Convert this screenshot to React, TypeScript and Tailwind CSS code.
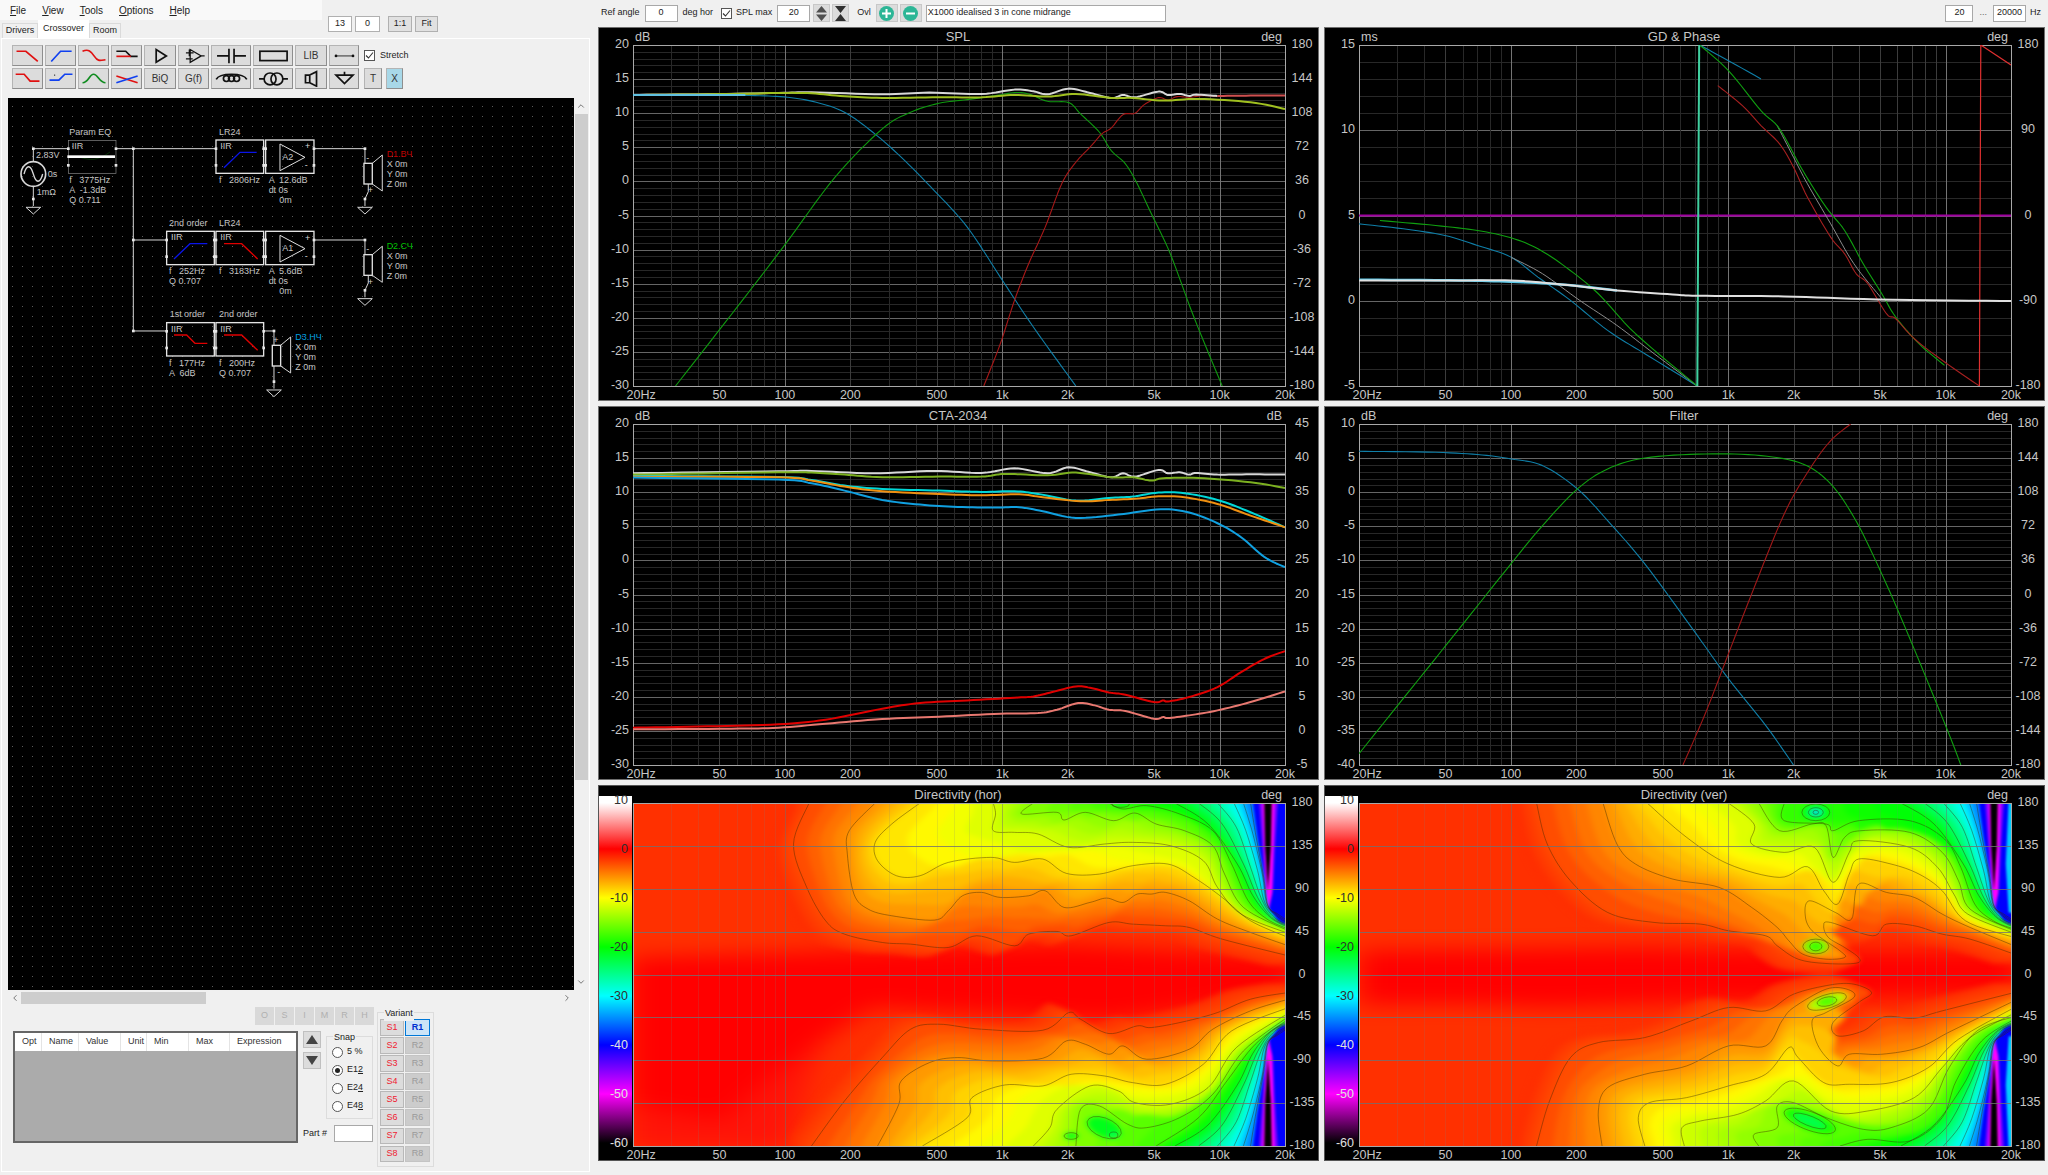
import React from 'react';
import { ChevronDown, ChevronLeft, ChevronRight, ChevronUp } from 'lucide-react';

type Pt = number[];

// ---- geometry helpers for curves and the directivity maps ----

function dense(pts: Pt[]): Pt[] {
  const out: Pt[] = [];
  for (let i = 0; i < pts.length - 1; i++) {
    const p0 = pts[Math.max(i - 1, 0)];
    const p1 = pts[i];
    const p2 = pts[i + 1];
    const p3 = pts[Math.min(i + 2, pts.length - 1)];
    for (let s = 0; s < 8; s++) {
      const t = s / 8;
      const t2 = t * t;
      const t3 = t2 * t;
      const f = (a: number, b: number, c: number, d: number) =>
        0.5 * (2 * b + (c - a) * t + (2 * a - 5 * b + 4 * c - d) * t2 + (3 * b - a - 3 * c + d) * t3);
      out.push([f(p0[0], p1[0], p2[0], p3[0]), f(p0[1], p1[1], p2[1], p3[1])]);
    }
  }
  out.push(pts[pts.length - 1]);
  return out;
}

function resample(pts: Pt[], n: number): Pt[] {
  const len = [0];
  for (let i = 1; i < pts.length; i++) len.push(len[i - 1] + Math.hypot(pts[i][0] - pts[i - 1][0], pts[i][1] - pts[i - 1][1]));
  const total = len[len.length - 1];
  const out: Pt[] = [];
  let k = 0;
  for (let i = 0; i < n; i++) {
    const d = (total * i) / (n - 1);
    while (k < len.length - 2 && len[k + 1] < d) k++;
    const t = (d - len[k]) / Math.max(len[k + 1] - len[k], 0.001);
    out.push([pts[k][0] + (pts[k + 1][0] - pts[k][0]) * t, pts[k][1] + (pts[k + 1][1] - pts[k][1]) * t]);
  }
  return out;
}

const toPath = (pts: Pt[]) => 'M' + pts.map((p) => `${p[0].toFixed(1)} ${p[1].toFixed(1)}`).join('L');
const curvePath = (pts: Pt[]) => toPath(dense(pts));

const scale: [number, number[]][] = [
  [10, [255, 255, 255]],
  [0, [255, 0, 0]],
  [-10, [255, 255, 0]],
  [-20, [0, 255, 0]],
  [-30, [0, 255, 255]],
  [-40, [0, 0, 255]],
  [-50, [255, 0, 255]],
  [-60, [0, 0, 0]],
];

function dbColor(db: number) {
  for (let i = 0; i < scale.length - 1; i++) {
    const [a, ca] = scale[i];
    const [b, cb] = scale[i + 1];
    if (db <= a && db >= b) {
      const t = (a - db) / (a - b);
      return `rgb(${ca.map((v, j) => Math.round(v + (cb[j] - v) * t)).join(',')})`;
    }
  }
  return '#000';
}

function bandsOf(chain: Pt[][], levels: number[], yEdge: number) {
  const res = chain.map((c) => resample(dense(c), 140));
  const out: { d: string; fill: string }[] = [];
  for (let i = 0; i < res.length - 1; i++) {
    for (let j = 0; j < 4; j++) {
      const t = j / 4;
      const pts = res[i].map((p, k) => [p[0] + (res[i + 1][k][0] - p[0]) * t, p[1] + (res[i + 1][k][1] - p[1]) * t]);
      const first = pts[0];
      const last = pts[pts.length - 1];
      out.push({
        d: `${toPath(pts)}L1530 ${last[1].toFixed(1)}L1530 ${yEdge}L${first[0].toFixed(1)} ${yEdge}Z`,
        fill: dbColor(levels[i] + (levels[i + 1] - levels[i]) * t),
      });
    }
  }
  return out;
}

// ---- directivity contour data (right hand edge is shared by both maps) ----

const rightTop: Pt[][] = [
  [[1240, 67], [1310, 130], [1372, 250], [1405, 345], [1442, 410], [1480, 440]],
  [[1290, 67], [1340, 130], [1385, 250], [1415, 350], [1445, 410], [1480, 436]],
  [[1330, 67], [1370, 140], [1400, 260], [1425, 360], [1450, 410], [1480, 432]],
  [[1365, 67], [1390, 150], [1415, 270], [1430, 365], [1455, 405], [1480, 428]],
  [[1385, 67], [1405, 160], [1425, 280], [1435, 370], [1457, 403], [1480, 424]],
  [[1400, 67], [1412, 170], [1428, 290], [1437, 375], [1458, 400], [1480, 420]],
];

const stripesTop: { pts: Pt[]; level: number }[] = [
  { level: -40, pts: [[1405, 60], [1415, 170], [1430, 300], [1440, 385], [1458, 420], [1470, 430], [1490, 425], [1490, 60]] },
  { level: -45, pts: [[1418, 60], [1425, 200], [1432, 330], [1440, 390], [1448, 330], [1452, 200], [1458, 60]] },
  { level: -50, pts: [[1425, 60], [1429, 200], [1434, 340], [1438, 380], [1445, 340], [1448, 200], [1451, 60]] },
  { level: -60, pts: [[1429, 60], [1431, 200], [1437, 330], [1443, 200], [1445, 60]] },
];

const flipY = (pts: Pt[]) => pts.map((p) => [p[0], 1162 - p[1]]);
const toVer = (pts: Pt[]) => pts.map((p) => [85 + ((p[0] - 92) * 1403) / 1381, p[1]]);
const offset = (pts: Pt[], dx: number, dy: number) => pts.map((p) => [p[0] + dx, p[1] + dy]);

const horTop: Pt[][] = [
  [[465, 67], [432, 190], [460, 320], [500, 420], [540, 460], [620, 485], [680, 490], [760, 500], [820, 465], [900, 495], [930, 460], [990, 452], [1020, 465], [1100, 425], [1150, 430], [1220, 435], [1270, 440], [1340, 475], [1480, 525]],
  [[605, 67], [550, 150], [546, 220], [560, 340], [590, 385], [640, 405], [730, 418], [760, 390], [790, 345], [830, 335], [870, 350], [930, 345], [965, 330], [1005, 380], [1060, 365], [1095, 352], [1130, 365], [1160, 340], [1190, 340], [1220, 335], [1270, 360], [1330, 415], [1400, 455], [1480, 495]],
  [[700, 67], [640, 130], [605, 185], [610, 240], [650, 285], [700, 285], [760, 245], [850, 230], [900, 245], [960, 235], [1010, 278], [1080, 280], [1150, 255], [1225, 250], [1280, 290], [1340, 350], [1400, 420], [1480, 470]],
  [[855, 67], [860, 100], [855, 150], [900, 155], [950, 160], [1015, 200], [1090, 190], [1150, 185], [1230, 195], [1300, 240], [1330, 320], [1380, 400], [1480, 458]],
  [[940, 67], [915, 100], [990, 95], [1005, 118], [1050, 95], [1110, 120], [1155, 97], [1200, 130], [1260, 150], [1320, 195], [1345, 280], [1385, 380], [1480, 450]],
  [[1100, 67], [1130, 85], [1180, 75], [1250, 100], [1320, 150], [1360, 250], [1395, 360], [1435, 415], [1480, 445]],
  ...rightTop,
];

const horBottom: Pt[][] = [
  [[470, 1095], [540, 960], [620, 830], [680, 745], [740, 730], [830, 745], [960, 748], [1015, 695], [1040, 715], [1100, 758], [1160, 735], [1190, 740], [1260, 722], [1330, 695], [1400, 655], [1480, 635]],
  [[610, 1095], [655, 970], [660, 900], [720, 845], [780, 830], [850, 840], [960, 832], [1010, 780], [1050, 790], [1100, 820], [1130, 795], [1180, 835], [1270, 805], [1320, 745], [1400, 690], [1480, 655]],
  [[705, 1095], [800, 1010], [810, 950], [880, 912], [960, 915], [1020, 880], [1090, 885], [1150, 905], [1220, 910], [1300, 850], [1360, 750], [1480, 680]],
  [[940, 1095], [975, 1040], [990, 985], [1060, 915], [1120, 930], [1155, 965], [1230, 970], [1310, 920], [1370, 800], [1480, 697]],
  [[1030, 1095], [1040, 985], [1080, 975], [1140, 1030], [1180, 1040], [1250, 1010], [1320, 940], [1385, 810], [1480, 707]],
  [[1200, 1095], [1290, 1010], [1350, 900], [1410, 790], [1480, 715]],
  ...rightTop.map(flipY),
];

const verTop: Pt[][] = [
  [[467, 67], [490, 190], [540, 300], [620, 395], [720, 425], [820, 430], [880, 450], [960, 465], [985, 495], [1030, 535], [1090, 548], [1155, 547], [1160, 530], [1130, 500], [1095, 470], [1085, 435], [1100, 425], [1190, 465], [1220, 430], [1280, 435], [1340, 460], [1400, 475], [1495, 520]],
  [[610, 67], [640, 190], [680, 250], [760, 295], [860, 320], [930, 380], [985, 440], [1010, 480], [1040, 520], [1090, 535], [1130, 530], [1120, 510], [1060, 450], [1045, 400], [1055, 360], [1110, 395], [1145, 415], [1160, 310], [1220, 335], [1280, 350], [1340, 400], [1400, 440], [1495, 495]],
  [[705, 67], [790, 170], [880, 250], [990, 290], [1050, 258], [1085, 330], [1115, 370], [1140, 280], [1160, 235], [1230, 250], [1290, 280], [1340, 330], [1390, 420], [1495, 470]],
  [[880, 67], [935, 130], [930, 190], [1000, 215], [1065, 200], [1105, 305], [1140, 215], [1160, 180], [1270, 200], [1330, 260], [1365, 340], [1395, 400], [1495, 458]],
  [[945, 67], [990, 150], [1060, 130], [1090, 135], [1105, 230], [1130, 170], [1165, 150], [1270, 155], [1340, 215], [1375, 300], [1400, 385], [1495, 450]],
  [[1000, 67], [1000, 120], [1090, 130], [1105, 150], [1160, 120], [1270, 120], [1345, 175], [1380, 260], [1410, 370], [1450, 420], [1495, 445]],
  ...rightTop.map(toVer),
];

const verBottom: Pt[][] = [
  [[467, 1095], [495, 960], [540, 830], [600, 785], [700, 770], [800, 720], [880, 680], [960, 690], [1020, 640], [1100, 612], [1150, 610], [1188, 635], [1160, 665], [1105, 725], [1115, 765], [1170, 750], [1215, 708], [1280, 712], [1340, 690], [1495, 635]],
  [[608, 1095], [600, 990], [620, 920], [700, 880], [790, 855], [880, 795], [960, 795], [995, 720], [1020, 680], [1090, 625], [1135, 625], [1150, 650], [1090, 695], [1060, 720], [1075, 800], [1115, 855], [1140, 820], [1210, 820], [1290, 800], [1360, 750], [1495, 660]],
  [[700, 1095], [686, 1010], [710, 965], [790, 950], [880, 915], [960, 880], [1010, 800], [1030, 830], [1085, 905], [1140, 910], [1230, 905], [1310, 860], [1375, 775], [1495, 680]],
  [[785, 1095], [780, 1040], [820, 1020], [900, 1000], [960, 960], [1020, 900], [1100, 990], [1180, 990], [1280, 950], [1340, 860], [1400, 770], [1495, 697]],
  [[945, 1095], [935, 1060], [985, 1040], [985, 975], [1020, 965], [1090, 1010], [1170, 1045], [1230, 1040], [1310, 985], [1355, 860], [1415, 750], [1495, 707]],
  [[1120, 1095], [1180, 1075], [1270, 1080], [1340, 1010], [1370, 900], [1425, 780], [1495, 715]],
  ...rightTop.map(flipY).map(toVer),
];

const mapLevels = [-1.8, -3, -6, -9, -12, -15, -18, -21, -24, -27, -30, -33, -36];

type Island = { cx: number; cy: number; rx: number; ry: number; rot: number; level: number };

const horIslands: Island[] = [
  { cx: 1020, cy: 1065, rx: 15, ry: 10, rot: 0, level: -21 },
  { cx: 1090, cy: 1040, rx: 42, ry: 26, rot: 40, level: -21 },
  { cx: 1110, cy: 1062, rx: 9, ry: 9, rot: 0, level: -24 },
  { cx: 1125, cy: 72, rx: 18, ry: 8, rot: 0, level: -21 },
];

const verIslands: Island[] = [
  { cx: 1068, cy: 95, rx: 30, ry: 25, rot: 0, level: -21 },
  { cx: 1068, cy: 95, rx: 16, ry: 14, rot: 0, level: -27 },
  { cx: 1068, cy: 95, rx: 6, ry: 6, rot: 0, level: -33 },
  { cx: 1068, cy: 497, rx: 28, ry: 22, rot: 0, level: -15 },
  { cx: 1068, cy: 497, rx: 13, ry: 13, rot: 0, level: -18 },
  { cx: 1092, cy: 662, rx: 45, ry: 20, rot: -25, level: -13 },
  { cx: 1092, cy: 662, rx: 22, ry: 13, rot: -20, level: -17 },
  { cx: 1055, cy: 1020, rx: 62, ry: 26, rot: 30, level: -19 },
  { cx: 1055, cy: 1020, rx: 40, ry: 14, rot: 30, level: -23 },
];

// ---- curve data, in plot coordinates of 1381/1403 x 1024 units ----

type Curve = { pts: Pt[]; color: string; w?: number; raw?: boolean };

const splCurves: Curve[] = [
  { color: '#0f7fa8', w: 1.1, pts: [[92, 283], [250, 283], [350, 285], [420, 290], [480, 305], [540, 335], [600, 395], [660, 470], [730, 570], [800, 680], [870, 830], [940, 980], [1030, 1157]] },
  { color: '#0f9a0f', w: 1.1, pts: [[182, 1157], [300, 943], [410, 740], [520, 530], [620, 385], [680, 335], [740, 308], [800, 297], [860, 285], [900, 276], [930, 280], [970, 302], [1015, 306], [1040, 340], [1080, 395], [1105, 450], [1135, 490], [1160, 550], [1190, 640], [1230, 760], [1280, 950], [1340, 1157]] },
  { color: '#a81818', w: 1.1, pts: [[835, 1157], [870, 1030], [900, 900], [930, 790], [965, 680], [1000, 550], [1030, 485], [1060, 440], [1085, 400], [1105, 382], [1130, 342], [1155, 338], [1175, 312], [1205, 291], [1225, 298], [1245, 288], [1270, 290], [1300, 285], [1330, 288]] },
  { color: '#d8d8d8', w: 2, pts: [[92, 283], [250, 281], [400, 277], [470, 275], [620, 281], [720, 276], [830, 280], [900, 267], [940, 272], [970, 281], [1015, 264], [1060, 277], [1105, 292], [1130, 283], [1155, 290], [1205, 273], [1225, 283], [1250, 280], [1270, 286], [1285, 282], [1330, 286]] },
  { color: '#d05050', w: 2, pts: [[1330, 286], [1400, 285], [1473, 285]] },
  { color: '#a0c020', w: 2, pts: [[92, 283], [300, 280], [400, 277], [470, 278], [540, 287], [620, 292], [740, 290], [830, 290], [900, 283], [970, 288], [1030, 280], [1105, 292], [1150, 292], [1215, 300], [1290, 295], [1400, 305], [1473, 325]] },
  { color: '#60c0e0', w: 2, pts: [[92, 283], [200, 283], [330, 283]] },
];

const gdCurves: Curve[] = [
  { color: '#a000a0', w: 2, pts: [[85, 645], [1488, 645]], raw: true },
  { color: '#0f7fa8', w: 1.1, pts: [[85, 670], [180, 685], [270, 705], [340, 735], [412, 770], [470, 830], [540, 900], [620, 990], [700, 1060], [813, 1157]] },
  { color: '#0f7fa8', w: 1.1, pts: [[818, 133], [880, 180], [950, 235]] },
  { color: '#8c8c8c', w: 1, pts: [[412, 770], [480, 820], [560, 900], [640, 975], [720, 1060], [813, 1157]] },
  { color: '#8c8c8c', w: 1, pts: [[985, 375], [1020, 470], [1050, 550], [1100, 670], [1150, 790], [1210, 895]] },
  { color: '#10a010', w: 1.1, pts: [[130, 660], [250, 675], [340, 690], [412, 712], [470, 745], [530, 800], [600, 880], [680, 1000], [813, 1157]] },
  { color: '#10a010', w: 1.1, pts: [[818, 133], [880, 210], [950, 330], [990, 385], [1040, 510], [1090, 620], [1130, 690], [1170, 790], [1210, 880], [1240, 950], [1290, 1030], [1345, 1095]] },
  { color: '#a82020', w: 1.1, pts: [[857, 255], [910, 315], [950, 375], [990, 430], [1020, 500], [1050, 590], [1100, 710], [1130, 760], [1155, 820], [1180, 850], [1220, 940], [1240, 955], [1280, 1015], [1345, 1085], [1420, 1157]] },
  { color: '#e03030', w: 1.2, pts: [[1420, 1157], [1423, 133], [1488, 193]], raw: true },
  { color: '#40d0a0', w: 2, pts: [[813, 1157], [817, 133]], raw: true },
  { color: '#5cc8e8', w: 2.5, pts: [[85, 838], [300, 840], [412, 844], [520, 852], [640, 870]] },
  { color: '#e0e0e0', w: 2, pts: [[85, 840], [300, 840], [412, 840], [520, 852], [640, 870], [760, 882], [815, 886], [1000, 888], [1200, 897], [1488, 902]] },
];

const ctaCurves: Curve[] = [
  { color: '#d8d8d8', w: 2, pts: [[92, 218], [400, 212], [470, 211], [600, 218], [730, 211], [830, 217], [900, 203], [970, 218], [1015, 200], [1060, 215], [1105, 230], [1130, 218], [1155, 228], [1205, 208], [1225, 218], [1250, 215], [1270, 222], [1285, 217], [1330, 222], [1400, 221], [1473, 222]] },
  { color: '#7cb020', w: 2, pts: [[92, 222], [400, 215], [470, 216], [540, 222], [620, 230], [740, 228], [830, 228], [880, 220], [970, 224], [1030, 216], [1105, 230], [1150, 230], [1190, 240], [1215, 233], [1290, 232], [1400, 245], [1473, 262]] },
  { color: '#00d8d8', w: 2, pts: [[92, 226], [400, 229], [470, 238], [540, 255], [620, 265], [740, 270], [830, 274], [900, 272], [950, 280], [1030, 300], [1100, 292], [1150, 288], [1205, 276], [1260, 278], [1330, 298], [1400, 335], [1473, 380]] },
  { color: '#f09010', w: 2, pts: [[92, 228], [400, 230], [470, 240], [540, 258], [620, 272], [740, 280], [830, 284], [910, 281], [960, 290], [1040, 302], [1100, 298], [1160, 294], [1205, 287], [1260, 290], [1330, 310], [1400, 345], [1473, 380]] },
  { color: '#10a0e0', w: 2, pts: [[92, 231], [400, 237], [470, 248], [540, 270], [620, 298], [700, 312], [780, 319], [860, 321], [910, 320], [960, 332], [1030, 352], [1120, 342], [1210, 326], [1270, 336], [1330, 368], [1380, 410], [1430, 470], [1473, 500]] },
  { color: '#e00000', w: 2, pts: [[92, 982], [250, 978], [400, 972], [500, 958], [620, 925], [700, 908], [800, 900], [900, 892], [940, 888], [980, 875], [1030, 858], [1060, 862], [1100, 876], [1135, 883], [1195, 905], [1215, 900], [1225, 903], [1270, 890], [1330, 860], [1380, 815], [1430, 775], [1473, 752]] },
  { color: '#e87870', w: 2, pts: [[92, 987], [300, 985], [400, 982], [500, 970], [620, 956], [740, 949], [870, 940], [950, 938], [990, 928], [1035, 908], [1070, 915], [1100, 928], [1135, 932], [1195, 955], [1215, 950], [1225, 953], [1270, 945], [1330, 930], [1400, 905], [1473, 873]] },
];

const filterCurves: Curve[] = [
  { color: '#0f7fa8', w: 1.1, pts: [[85, 152], [250, 155], [350, 163], [412, 175], [480, 195], [555, 265], [620, 360], [700, 490], [800, 680], [880, 835], [960, 975], [1020, 1094]] },
  { color: '#10a010', w: 1.1, pts: [[85, 1060], [200, 860], [300, 686], [412, 490], [480, 375], [555, 265], [620, 205], [700, 172], [830, 160], [950, 165], [1040, 190], [1100, 250], [1150, 350], [1200, 490], [1260, 680], [1350, 985], [1380, 1094]] },
  { color: '#a01818', w: 1.1, pts: [[782, 1094], [830, 940], [880, 760], [930, 580], [1000, 340], [1055, 205], [1100, 120], [1143, 70]] },
];

// ---- chart panels ----

const PANEL_W = 721;
const PLOT_X = 35;
const PLOT_W = 652;
const freqLabels: [string, number][] = [['20Hz', 21.8], ['50', 50], ['100', 100], ['200', 200], ['500', 500], ['1k', 1000], ['2k', 2000], ['5k', 5000], ['10k', 10000], ['20k', 20000]];
const freqLines = [20, 30, 40, 50, 60, 70, 80, 90, 100, 200, 300, 400, 500, 600, 700, 800, 900, 1000, 2000, 3000, 4000, 5000, 6000, 7000, 8000, 9000, 10000, 20000];
const fx = (f: number) => PLOT_X + (Math.log10(f / 20) / 3) * PLOT_W;
const isDecade = (f: number) => f === 100 || f === 1000 || f === 10000;
const labelColor = '#c6c6c6';

function AxisText({ plotTop, plotH, left, right, title, unitL, unitR, xY }: { plotTop: number; plotH: number; left: string[]; right: string[]; title: string; unitL?: string; unitR: string; xY: number }) {
  return (
    <g fill={labelColor} fontSize={12.5}>
      <text x={360} y={14} fontSize={13} textAnchor="middle">{title}</text>
      {unitL && <text x={37} y={14}>{unitL}</text>}
      <text x={684} y={14} textAnchor="end">{unitR}</text>
      {left.map((t, i) => (
        <text key={t} x={31} y={plotTop + (plotH * i) / (left.length - 1) + 3} textAnchor="end">{t}</text>
      ))}
      {right.map((t, i) => (
        <text key={t} x={704} y={plotTop + (plotH * i) / (right.length - 1) + 3} textAnchor="middle">{t}</text>
      ))}
      {freqLabels.map(([t, f]) => (
        <text key={t} x={fx(f)} y={xY} textAnchor="middle">{t}</text>
      ))}
    </g>
  );
}

function LineChart({ title, unitL, unitR, left, right, minors, vb, curves }: { title: string; unitL: string; unitR: string; left: string[]; right: string[]; minors: number; vb: string; curves: Curve[] }) {
  const top = 18;
  const h = 341;
  const divs = (left.length - 1) * minors;
  return (
    <div className="bg-black h-full">
      <svg width={PANEL_W} height={374} className="block">
        <rect x={0.5} y={0.5} width={PANEL_W - 1} height={373} fill="none" stroke="#6e6e6e" />
        {Array.from({ length: divs + 1 }, (_, i) => {
          const y = Math.round(top + (h * i) / divs) + 0.5;
          return <line key={i} x1={PLOT_X} x2={PLOT_X + PLOT_W} y1={y} y2={y} stroke={i % minors === 0 ? '#666666' : '#282828'} />;
        })}
        {freqLines.map((f) => {
          const x = Math.round(fx(f)) + 0.5;
          return <line key={f} x1={x} x2={x} y1={top} y2={top + h} stroke={isDecade(f) ? '#747474' : f % 1000 === 0 || f === 200 || f === 500 || f === 50 ? '#3c3c3c' : '#282828'} />;
        })}
        <rect x={PLOT_X + 0.5} y={top + 0.5} width={PLOT_W} height={h} fill="none" stroke="#a8a8a8" />
        <svg x={PLOT_X} y={top} width={PLOT_W} height={h} viewBox={vb} preserveAspectRatio="none">
          {curves.map((c, i) => (
            <path key={i} d={c.raw ? toPath(c.pts) : curvePath(c.pts)} fill="none" stroke={c.color} strokeWidth={c.w ?? 1.1} vectorEffect="non-scaling-stroke" strokeLinejoin="round" />
          ))}
        </svg>
        <AxisText plotTop={top} plotH={h} left={left} right={right} title={title} unitL={unitL} unitR={unitR} xY={372} />
      </svg>
    </div>
  );
}

const barStops = [
  [0, '#ffffff'],
  [0.02, '#ffffff'],
  [(64 - 11) / 350, '#ff0000'],
  [(113 - 11) / 350, '#ffff00'],
  [(162 - 11) / 350, '#00ff00'],
  [(211 - 11) / 350, '#00ffff'],
  [(260 - 11) / 350, '#0000ff'],
  [(309 - 11) / 350, '#ff00ff'],
  [(358 - 11) / 350, '#000000'],
] as [number, string][];

function DirectivityChart({ id, title, vb, top: topChain, bottom, islands, redBand, edge, plotMap }: { id: string; title: string; vb: string; top: Pt[][]; bottom: Pt[][]; islands: Island[]; redBand: Pt[][]; edge?: boolean; plotMap: (p: Pt[]) => Pt[] }) {
  const plotTop = 18;
  const plotH = 343;
  const bands = [
    ...bandsOf([offset(topChain[0], -45, 28), ...topChain], mapLevels, 30),
    ...bandsOf([offset(bottom[0], -45, -28), ...bottom], mapLevels, 1135),
  ];
  const lines = [...topChain, ...bottom].map((c) => curvePath(c));
  const stripes = [
    ...stripesTop.map((s) => ({ level: s.level, d: toPath(plotMap(s.pts)) + 'Z' })),
    ...stripesTop.map((s) => ({ level: s.level, d: toPath(plotMap(flipY(s.pts))) + 'Z' })),
  ];
  const edgeShapes = edge
    ? [plotMap([[1468, 60], [1462, 250], [1468, 395], [1490, 400], [1490, 60]]), plotMap(flipY([[1468, 60], [1462, 250], [1468, 395], [1490, 400], [1490, 60]]))]
    : [];
  return (
    <div className="bg-black h-full">
      <svg width={PANEL_W} height={376} className="block">
        <defs>
          <linearGradient id={`${id}-bar`} x1="0" x2="0" y1="0" y2="1">
            {barStops.map(([o, c]) => (
              <stop key={o} offset={o} stopColor={c} />
            ))}
          </linearGradient>
          <filter id={`${id}-wide`} filterUnits="userSpaceOnUse" x={-100} y={-100} width={1800} height={1500} colorInterpolationFilters="sRGB">
            <feGaussianBlur stdDeviation="30 30" />
          </filter>
          <filter id={`${id}-soft`} filterUnits="userSpaceOnUse" x={-100} y={-100} width={1800} height={1500} colorInterpolationFilters="sRGB">
            <feGaussianBlur stdDeviation="7 8" />
          </filter>
          <filter id={`${id}-thin`} filterUnits="userSpaceOnUse" x={-100} y={-100} width={1800} height={1500} colorInterpolationFilters="sRGB">
            <feGaussianBlur stdDeviation="2 3" />
          </filter>
        </defs>
        <rect x={0.5} y={0.5} width={PANEL_W - 1} height={375} fill="none" stroke="#555555" />
        <rect x={1} y={11} width={33} height={350} fill={`url(#${id}-bar)`} />
        <svg x={PLOT_X} y={plotTop} width={PLOT_W} height={plotH} viewBox={vb} preserveAspectRatio="none">
          <g filter={`url(#${id}-wide)`}>
            <rect x={-50} y={-50} width={1700} height={1300} fill="#ff3000" />
            {redBand.map((p, i) => (
              <path key={i} d={toPath(p) + 'Z'} fill={i === 0 ? '#ff1408' : '#ff0000'} />
            ))}
          </g>
          <g filter={`url(#${id}-soft)`}>
            {bands.map((b, i) => (
              <path key={i} d={b.d} fill={b.fill} />
            ))}
            {islands.map((e, i) => (
              <ellipse key={i} cx={e.cx} cy={e.cy} rx={e.rx} ry={e.ry} transform={`rotate(${e.rot} ${e.cx} ${e.cy})`} fill={dbColor(e.level)} />
            ))}
          </g>
          <g filter={`url(#${id}-thin)`}>
            {stripes.filter((s) => s.level === -40).map((s, i) => (
              <path key={i} d={s.d} fill={dbColor(s.level)} />
            ))}
            {edgeShapes.map((p, i) => (
              <path key={i} d={toPath(p) + 'Z'} fill={dbColor(-32)} />
            ))}
            {stripes.filter((s) => s.level < -40).map((s, i) => (
              <path key={i} d={s.d} fill={dbColor(s.level)} />
            ))}
          </g>
          <g fill="none" stroke="#3a2600" strokeOpacity={0.42}>
            {lines.map((d, i) => (
              <path key={i} d={d} strokeWidth={1} vectorEffect="non-scaling-stroke" />
            ))}
            {islands.map((e, i) => (
              <ellipse key={i} cx={e.cx} cy={e.cy} rx={e.rx} ry={e.ry} transform={`rotate(${e.rot} ${e.cx} ${e.cy})`} strokeWidth={1} vectorEffect="non-scaling-stroke" />
            ))}
          </g>
        </svg>
        {freqLines.map((f) => {
          const x = Math.round(fx(f)) + 0.5;
          return <line key={f} x1={x} x2={x} y1={plotTop} y2={plotTop + plotH} stroke={isDecade(f) ? '#707070' : '#808080'} strokeOpacity={isDecade(f) ? 0.5 : 0.18} />;
        })}
        {[1, 2, 3, 4, 5, 6, 7].map((i) => {
          const y = Math.round(plotTop + (plotH * i) / 8) + 0.5;
          return <line key={i} x1={PLOT_X} x2={PLOT_X + PLOT_W} y1={y} y2={y} stroke="#707070" strokeOpacity={0.8} />;
        })}
        <rect x={PLOT_X + 0.5} y={plotTop + 0.5} width={PLOT_W} height={plotH} fill="none" stroke="#a8a8a8" />
        <AxisText plotTop={plotTop} plotH={plotH} left={[]} right={['180', '135', '90', '45', '0', '-45', '-90', '-135', '-180']} title={title} unitR="deg" xY={374} />
        <g fontSize={12.5}>
          {['10', '0', '-10', '-20', '-30', '-40', '-50', '-60'].map((t, i) => (
            <text key={t} x={30} y={19 + i * 49} textAnchor="end" fill={i < 5 ? '#303030' : '#e0e0e0'}>{t}</text>
          ))}
        </g>
      </svg>
    </div>
  );
}

const horRed: Pt[][] = [
  [[85, 560], [500, 560], [500, 740], [420, 1105], [85, 1105]],
  [[85, 530], [1000, 490], [1490, 530], [1490, 640], [1100, 720], [600, 680], [400, 870], [280, 1020], [85, 970]],
];
const verRed: Pt[][] = [
  [[85, 590], [500, 590], [500, 660], [85, 680]],
  [[85, 510], [700, 500], [1000, 510], [1500, 510], [1500, 640], [900, 660], [500, 680], [85, 660]],
];

// ---- schematic ----

function Ground({ x, y }: { x: number; y: number }) {
  return <path d={`M${x - 22} ${y}H${x + 22}L${x} ${y + 20}Z`} fill="none" stroke="#d8d8d8" strokeWidth={3} />;
}

function Dot({ x, y }: { x: number; y: number }) {
  return <rect x={x - 4} y={y - 4} width={8} height={8} fill="#e8e8e8" />;
}

function Speaker({ x, y, upper, lower }: { x: number; y: number; upper: string; lower: string }) {
  return (
    <g>
      <rect x={x} y={y} width={25} height={62} fill="none" stroke="#e0e0e0" strokeWidth={4} />
      <path d={`M${x + 25} ${y}L${x + 55} ${y - 25}V${y + 83}L${x + 25} ${y + 62}`} fill="none" stroke="#d8d8d8" strokeWidth={3} />
      <text x={x + 11} y={y - 8} fill="#d0d0d0" textAnchor="middle" fontSize={27}>{upper}</text>
      <text x={x + 19} y={y + 90} fill="#d0d0d0" textAnchor="middle" fontSize={27}>{lower}</text>
    </g>
  );
}

function FilterBox({ x, y, d, color }: { x: number; y: number; d: string; color: string }) {
  return (
    <g>
      <rect x={x} y={y} width={143} height={100} fill="none" stroke="#e4e4e4" strokeWidth={4} />
      <text x={x + 13} y={y + 27} fill="#c8c8c8" fontSize={27}>IIR</text>
      <path d={d} transform={`translate(${x} ${y})`} fill="none" stroke={color} strokeWidth={4} />
      <Dot x={x} y={y + 26} />
      <Dot x={x + 143} y={y + 26} />
      <Dot x={x} y={y + 76} />
      <Dot x={x + 143} y={y + 76} />
    </g>
  );
}

function Amp({ x, y, name }: { x: number; y: number; name: string }) {
  return (
    <g>
      <rect x={x} y={y} width={145} height={100} fill="none" stroke="#e4e4e4" strokeWidth={4} />
      <path d={`M${x + 43} ${y + 12}V${y + 92}L${x + 118} ${y + 52}Z`} fill="none" stroke="#e0e0e0" strokeWidth={3} />
      <text x={x + 50} y={y + 60} fill="#c8c8c8" fontSize={27}>{name}</text>
      <text x={x + 126} y={y + 28} fill="#d8d8d8" fontSize={27} textAnchor="middle">+</text>
      <text x={x + 122} y={y + 84} fill="#d8d8d8" fontSize={27} textAnchor="middle">-</text>
      <Dot x={x} y={y + 26} />
      <Dot x={x + 145} y={y + 26} />
      <Dot x={x} y={y + 76} />
      <Dot x={x + 145} y={y + 76} />
    </g>
  );
}

function Schematic() {
  const t = (s: string, x: number, y: number, fill = '#c4c4c4') => (
    <text x={x} y={y} fill={fill} fontSize={27} xmlSpace="preserve">{s}</text>
  );
  return (
    <svg width={566} height={892} viewBox="8 98 566 892" className="block">
      <defs>
        <pattern id="canvas-dots" x={8} y={98} width={10} height={10} patternUnits="userSpaceOnUse">
          <rect x={4} y={8} width={1} height={1} fill="#5a5a5a" />
        </pattern>
      </defs>
      <rect x={8} y={98} width={566} height={892} fill="url(#canvas-dots)" />
      <g transform="translate(0 120) scale(0.3333)">
        <path d="M100 86H205M100 86V125M100 200V258M348 86H650M400 86V633M400 360H500M400 633H500M942 86H1095V130M1105 192V215L1095 237V258M942 360H1095V404M1105 466V489L1095 511V532M792 633H822V676M822 738V806" fill="none" stroke="#d8d8d8" strokeWidth={3} />
        <circle cx={100} cy={162} r={37} fill="none" stroke="#d8d8d8" strokeWidth={5} />
        <path d="M72 162C80 132 92 134 100 162C108 190 120 192 128 162" fill="none" stroke="#d8d8d8" strokeWidth={4} />
        <Dot x={100} y={86} />
        <Dot x={100} y={237} />
        <Ground x={100} y={262} />
        {t('2.83V', 108, 113)}
        {t('0s', 143, 171)}
        {t('1mΩ', 110, 226)}

        {t('Param EQ', 208, 44)}
        <rect x={205} y={62} width={143} height={98} fill="none" stroke="#8a8a8a" strokeWidth={2} />
        <path d="M240 112C270 120 290 125 330 96" fill="none" stroke="#0a4a0a" strokeWidth={2} />
        <rect x={202} y={106} width={143} height={8} fill="#ffffff" />
        {t('IIR', 215, 87)}
        <Dot x={205} y={86} />
        <Dot x={348} y={86} />
        <Dot x={205} y={136} />
        <Dot x={348} y={136} />
        {t('f   3775Hz', 208, 189)}
        {t('A  -1.3dB', 208, 219)}
        {t('Q 0.711', 208, 249)}

        {t('LR24', 657, 44)}
        <FilterBox x={648} y={60} d="M24 83L72 37H122" color="#0a14e8" />
        <Amp x={797} y={60} name="A2" />
        {t('f   2806Hz', 657, 189)}
        {t('A  12.6dB', 806, 189)}
        {t('dt 0s', 806, 219)}
        {t('0m', 838, 249)}
        <Dot x={400} y={86} />
        <Dot x={1095} y={86} />
        <Speaker x={1092} y={130} upper="-" lower="+" />
        <Dot x={1095} y={237} />
        <Ground x={1095} y={262} />
        {t('D1.ВЧ', 1160, 112, '#c00000')}
        {t('X 0m', 1160, 142)}
        {t('Y 0m', 1160, 172)}
        {t('Z 0m', 1160, 202)}

        {t('2nd order', 507, 318)}
        {t('LR24', 657, 318)}
        <FilterBox x={500} y={334} d="M22 83L70 37H122" color="#0a14e8" />
        <FilterBox x={648} y={334} d="M24 37H77L125 83" color="#e00000" />
        <Amp x={797} y={334} name="A1" />
        {t('f   252Hz', 507, 463)}
        {t('Q 0.707', 507, 493)}
        {t('f   3183Hz', 657, 463)}
        {t('A  5.6dB', 806, 463)}
        {t('dt 0s', 806, 493)}
        {t('0m', 838, 523)}
        <Dot x={400} y={360} />
        <Dot x={1095} y={360} />
        <Speaker x={1092} y={404} upper="-" lower="+" />
        <Dot x={1095} y={511} />
        <Ground x={1095} y={536} />
        {t('D2.СЧ', 1160, 386, '#00c000')}
        {t('X 0m', 1160, 416)}
        {t('Y 0m', 1160, 446)}
        {t('Z 0m', 1160, 476)}

        {t('1st order', 509, 592)}
        {t('2nd order', 657, 592)}
        <FilterBox x={500} y={608} d="M22 37H60L85 62H122" color="#e00000" />
        <FilterBox x={648} y={608} d="M24 37H77L125 83" color="#e00000" />
        {t('f   177Hz', 507, 737)}
        {t('A  6dB', 507, 767)}
        {t('f   200Hz', 657, 737)}
        {t('Q 0.707', 657, 767)}
        <Dot x={400} y={633} />
        <Dot x={822} y={633} />
        <Speaker x={817} y={676} upper="+" lower="-" />
        <Dot x={822} y={785} />
        <Ground x={822} y={810} />
        {t('D3.НЧ', 886, 660, '#00a0e0')}
        {t('X 0m', 886, 690)}
        {t('Y 0m', 886, 720)}
        {t('Z 0m', 886, 750)}
      </g>
    </svg>
  );
}

// ---- toolbar ----

function ToolIcon({ children, w = 31 }: { children: React.ReactNode; w?: number }) {
  return (
    <svg width={w - 3} height={17} viewBox={`0 0 ${w} 20`} fill="none" strokeWidth={2}>
      {children}
    </svg>
  );
}

function ToolBtn({ w, children, active }: { w: number; children: React.ReactNode; active?: boolean }) {
  const widthClass: Record<number, string> = {
    17: 'w-[17px]',
    18: 'w-[18px]',
    30: 'w-[30px]',
    31: 'w-[31px]',
    32: 'w-[32px]',
    40: 'w-[40px]',
  };
  return (
    <button className={`${widthClass[w]} h-[21px] flex items-center justify-center text-[10px] text-[#333] border border-[#b4b4b4] border-r-[#8e8e8e] border-b-[#8e8e8e] ${active ? 'bg-[#a8d8e8]' : 'bg-[#dcdcdc]'}`}>
      {children}
    </button>
  );
}

function CheckBox({ checked = true }: { checked?: boolean }) {
  return (
    <span className="w-[11px] h-[11px] border border-[#555] bg-white flex items-center justify-center shrink-0">
      {checked && (
        <svg width={9} height={9} viewBox="0 0 9 9" fill="none" stroke="#333" strokeWidth={1.1}>
          <path d="M1 4.5L3.5 7L8 1.5" />
        </svg>
      )}
    </span>
  );
}

function Toolbar() {
  return (
    <div className="flex flex-col gap-[2px] pl-[10px] pt-[6px] h-[59px]">
      <div className="flex gap-[2px] items-center">
        <ToolBtn w={31}><ToolIcon><path d="M2 5H13L27 17" stroke="#e01010" /></ToolIcon></ToolBtn>
        <ToolBtn w={31}><ToolIcon><path d="M4 17L15 5H28" stroke="#1040f0" /></ToolIcon></ToolBtn>
        <ToolBtn w={31}><ToolIcon><path d="M2 5C9 2 12 5 16 11C20 17 22 16 29 15" stroke="#e01010" /></ToolIcon></ToolBtn>
        <ToolBtn w={31}><ToolIcon><path d="M3 5H14L20 11H28" stroke="#111" /><path d="M3 11H20" stroke="#e01010" /></ToolIcon></ToolBtn>
        <ToolBtn w={32}><ToolIcon><path d="M11 3V18L23 10.5Z" stroke="#111" /></ToolIcon></ToolBtn>
        <ToolBtn w={31}><ToolIcon><path d="M11 3V18L24 10.5ZM6 7H15M10 3V11M6 14H14M24 10.5H28" stroke="#111" strokeWidth={1.5} /></ToolIcon></ToolBtn>
        <ToolBtn w={40}><ToolIcon w={40}><path d="M3 10.5H17M17 2V19M23 2V19M23 10.5H37" stroke="#111" /></ToolIcon></ToolBtn>
        <ToolBtn w={40}><ToolIcon w={40}><rect x={4} y={5} width={32} height={11} stroke="#111" /></ToolIcon></ToolBtn>
        <ToolBtn w={32}>LIB</ToolBtn>
        <ToolBtn w={30}><ToolIcon w={30}><path d="M5 10.5H25" stroke="#111" strokeWidth={1} /><circle cx={5} cy={10.5} r={1.6} fill="#111" /><circle cx={25} cy={10.5} r={1.6} fill="#111" /></ToolIcon></ToolBtn>
        <span className="ml-[3px] flex items-center gap-[5px] text-[9px] text-[#222]"><CheckBox /> Stretch</span>
      </div>
      <div className="flex gap-[2px] items-center">
        <ToolBtn w={31}><ToolIcon><path d="M1 5H11L18 13H29" stroke="#e01010" /></ToolIcon></ToolBtn>
        <ToolBtn w={31}><ToolIcon><path d="M2 12H13L20 5H29" stroke="#1040f0" /><circle cx={8} cy={6} r={0.8} fill="#111" stroke="none" /></ToolIcon></ToolBtn>
        <ToolBtn w={31}><ToolIcon><path d="M2 15C9 15 10 5 15 5C20 5 22 15 29 15" stroke="#108c20" /></ToolIcon></ToolBtn>
        <ToolBtn w={31}><ToolIcon><path d="M3 7L28 15" stroke="#e01010" /><path d="M3 15L28 7" stroke="#1040f0" /></ToolIcon></ToolBtn>
        <ToolBtn w={32}>BiQ</ToolBtn>
        <ToolBtn w={31}>G(f)</ToolBtn>
        <ToolBtn w={40}><ToolIcon w={40}><path d="M2 11C6 3 34 3 38 11" stroke="#111" /><circle cx={14} cy={10} r={3.5} stroke="#111" /><circle cx={20} cy={10} r={3.5} stroke="#111" /><circle cx={26} cy={10} r={3.5} stroke="#111" /></ToolIcon></ToolBtn>
        <ToolBtn w={40}><ToolIcon w={40}><circle cx={16} cy={10.5} r={7} stroke="#111" /><circle cx={24} cy={10.5} r={7} stroke="#111" /><path d="M3 10.5H9M31 10.5H37" stroke="#111" /></ToolIcon></ToolBtn>
        <ToolBtn w={32}><ToolIcon><path d="M9 6H14V15H9ZM14 6L22 2V19L14 15" stroke="#111" /></ToolIcon></ToolBtn>
        <ToolBtn w={30}><ToolIcon w={30}><path d="M5 6H25L15 16ZM15 2V6" stroke="#111" /></ToolIcon></ToolBtn>
        <span className="w-px" />
        <ToolBtn w={18}>T</ToolBtn>
        <span className="w-px -ml-[1px]" />
        <ToolBtn w={17} active>X</ToolBtn>
      </div>
    </div>
  );
}

// ---- lower left panel ----

function TableHead({ w, label }: { w: string; label: string }) {
  return <div className={`${w} h-full border-r border-[#e4e4e4] pl-[7px] flex items-center`}>{label}</div>;
}

function Radio({ label, checked }: { label: React.ReactNode; checked?: boolean }) {
  return (
    <div className="flex items-center gap-[4px] h-[18px]">
      <span className="w-[11px] h-[11px] rounded-full border border-[#555] bg-white flex items-center justify-center">
        {checked && <span className="w-[5px] h-[5px] rounded-full bg-[#222]" />}
      </span>
      <span>{label}</span>
    </div>
  );
}

function VariantBtn({ label, kind }: { label: string; kind: 's' | 'on' | 'off' }) {
  const cls =
    kind === 's'
      ? 'w-[24px] bg-[#dcdcdc] text-[#f02030] border-[#b8b8b8]'
      : kind === 'on'
        ? 'w-[25px] bg-[#cce4f7] text-[#0030d0] font-bold border-[#0078d7]'
        : 'w-[25px] bg-[#cccccc] text-[#9a9a9a] border-[#c4c4c4]';
  return <div className={`h-[16.5px] flex items-center justify-center border ${cls}`}>{label}</div>;
}

function BottomPanel() {
  return (
    <div className="flex text-[9px] text-[#222] pl-[11px] pt-[2px]">
      <div className="w-[362px]">
        <div className="flex justify-end gap-[1px] h-[18px] pr-[1px]">
          {['O', 'S', 'I', 'M', 'R', 'H'].map((c) => (
            <div key={c} className="w-[19px] bg-[#d9d9d9] text-[#b0b0b0] flex items-center justify-center">{c}</div>
          ))}
        </div>
        <div className="flex mt-[6px]">
          <div className="w-[285px] h-[112px] border-2 border-[#666] bg-[#ababab]">
            <div className="h-[18px] bg-white flex text-[#333]">
              <TableHead w="w-[27px]" label="Opt" />
              <TableHead w="w-[37px]" label="Name" />
              <TableHead w="w-[42px]" label="Value" />
              <TableHead w="w-[26px]" label="Unit" />
              <TableHead w="w-[42px]" label="Min" />
              <TableHead w="w-[41px]" label="Max" />
              <div className="flex-1 pl-[7px] flex items-center">Expression</div>
            </div>
          </div>
          <div className="ml-[5px] w-[70px]">
            <div className="flex">
              <div className="w-[18px] flex flex-col gap-[4px]">
                <div className="h-[17px] bg-[#dcdcdc] border border-[#c0c0c0] flex items-center justify-center">
                  <svg width={12} height={9} viewBox="0 0 12 9"><path d="M6 0L12 9H0Z" fill="#444" /></svg>
                </div>
                <div className="h-[17px] bg-[#dcdcdc] border border-[#c0c0c0] flex items-center justify-center">
                  <svg width={12} height={9} viewBox="0 0 12 9"><path d="M6 9L12 0H0Z" fill="#444" /></svg>
                </div>
              </div>
              <div className="relative ml-[5px] mt-[5px] w-[47px] h-[83px] border border-[#dcdcdc] pl-[5px] pt-[6px]">
                <span className="absolute -top-[6px] left-[6px] bg-[#f0f0f0] px-[1px]">Snap</span>
                <Radio label="5 %" />
                <Radio label={<>E1<u>2</u></>} checked />
                <Radio label={<>E2<u>4</u></>} />
                <Radio label={<>E4<u>8</u></>} />
              </div>
            </div>
            <div className="flex items-center justify-between mt-[6px]">
              <span>Part #</span>
              <div className="w-[39px] h-[17px] bg-white border border-[#a8a8a8]" />
            </div>
          </div>
        </div>
      </div>
      <div className="relative ml-[2px] mt-[5px] w-[57px] h-[155px] border border-[#dcdcdc] pl-[2px] pt-[6px]">
        <span className="absolute -top-[6px] left-[6px] bg-[#f0f0f0] px-[1px]">Variant</span>
        <div className="flex flex-col gap-[1.6px]">
          {[1, 2, 3, 4, 5, 6, 7, 8].map((n) => (
            <div key={n} className="flex gap-[1px]">
              <VariantBtn label={`S${n}`} kind="s" />
              <VariantBtn label={`R${n}`} kind={n === 1 ? 'on' : 'off'} />
            </div>
          ))}
        </div>
      </div>
    </div>
  );
}

// ---- top areas ----

function SmallBtn({ w, label, plain }: { w: string; label: string; plain?: boolean }) {
  return <div className={`${w} h-[16px] flex items-center justify-center border border-[#b0b0b0] ${plain ? 'bg-white' : 'bg-[#e1e1e1]'}`}>{label}</div>;
}

function LeftColumn() {
  const menus = [
    ['F', 'ile', 'ml-[10px]'],
    ['V', 'iew', 'ml-[16px]'],
    ['T', 'ools', 'ml-[16px]'],
    ['O', 'ptions', 'ml-[16px]'],
    ['H', 'elp', 'ml-[16px]'],
  ];
  return (
    <div className="w-[598px] h-full flex flex-col text-[9px] text-[#222] shrink-0">
      <div className="flex h-[38px]">
        <div className="w-[322px]">
          <div className="h-[20px] bg-[#f9f9f9] flex items-center text-[10px]">
            {menus.map(([a, b, m]) => (
              <span key={a} className={m}><u>{a}</u>{b}</span>
            ))}
          </div>
          <div className="flex items-end h-[18px] pl-[2px]">
            <div className="w-[36px] h-[15px] bg-[#f0f0f0] border border-[#dadada] border-b-0 flex items-center justify-center">Drivers</div>
            <div className="w-[51px] h-[18px] bg-white flex items-center justify-center">Crossover</div>
            <div className="w-[32px] h-[15px] bg-[#f0f0f0] border border-[#dadada] border-b-0 flex items-center justify-center">Room</div>
          </div>
        </div>
        <div className="flex gap-[3px] pt-[16px] pl-[6px] h-[32px]">
          <SmallBtn w="w-[24px]" label="13" plain />
          <SmallBtn w="w-[25px]" label="0" plain />
          <div className="w-[2px]" />
          <SmallBtn w="w-[24px]" label="1:1" />
          <SmallBtn w="w-[23px]" label="Fit" />
        </div>
      </div>
      <div className="ml-[1px] mr-[8px] h-[1134px] bg-[#f0f0f0] border border-white">
        <Toolbar />
        <div className="flex pl-[6px]">
          <div className="w-[566px] h-[892px] bg-black">
            <Schematic />
          </div>
          <div className="w-[14px] h-[892px] flex flex-col items-center bg-[#f0f0f0] text-[#606060]">
            <ChevronUp size={10} className="my-[3px]" />
            <div className="w-[13px] h-[666px] bg-[#cdcdcd]" />
            <div className="flex-1" />
            <ChevronDown size={10} className="my-[3px]" />
          </div>
        </div>
        <div className="flex items-center ml-[6px] w-[566px] h-[15px] text-[#606060]">
          <ChevronLeft size={10} className="ml-[2px]" />
          <div className="ml-[1px] w-[185px] h-[12px] bg-[#cdcdcd]" />
          <div className="flex-1" />
          <ChevronRight size={10} className="mr-[2px]" />
        </div>
        <BottomPanel />
      </div>
    </div>
  );
}

function TextBox({ w, label, align = 'center' }: { w: string; label: string; align?: 'center' | 'left' }) {
  return (
    <div className={`${w} h-[17px] bg-white border border-[#a8a8a8] flex items-center ${align === 'center' ? 'justify-center' : 'pl-[1px]'}`}>{label}</div>
  );
}

function RoundBtn({ d }: { d: string }) {
  return (
    <div className="w-[22px] h-[18px] bg-[#dcdcdc] border border-[#c8c8c8] flex items-center justify-center">
      <svg width={15} height={15} viewBox="0 0 15 15">
        <circle cx={7.5} cy={7.5} r={7.5} fill="#2cb696" />
        <path d={d} stroke="#fff" strokeWidth={2} fill="none" />
      </svg>
    </div>
  );
}

function TopBar() {
  return (
    <div className="h-[27px] flex items-center text-[9px] text-[#222] pl-[3px] pr-[4px] pb-[1px]">
      <span>Ref angle</span>
      <div className="ml-[5px]"><TextBox w="w-[33px]" label="0" /></div>
      <span className="ml-[5px]">deg hor</span>
      <div className="ml-[8px]"><CheckBox /></div>
      <span className="ml-[4px]">SPL max</span>
      <div className="ml-[5px]"><TextBox w="w-[33px]" label="20" /></div>
      <div className="ml-[3px] w-[17px] h-[18px] bg-[#dcdcdc] border border-[#c8c8c8] flex items-center justify-center">
        <svg width={11} height={15} viewBox="0 0 11 15" fill="#505050"><path d="M5.5 0L11 6.5H0ZM5.5 15L11 8.5H0Z" /></svg>
      </div>
      <div className="ml-[2px] w-[17px] h-[18px] bg-[#dcdcdc] border border-[#c8c8c8] flex items-center justify-center">
        <svg width={11} height={15} viewBox="0 0 11 15" fill="#303030"><path d="M0 0H11L5.5 7ZM0 15H11L5.5 8Z" /></svg>
      </div>
      <span className="ml-[8px]">Ovl</span>
      <div className="ml-[5px]"><RoundBtn d="M7.5 3V12M3 7.5H12" /></div>
      <div className="ml-[2px]"><RoundBtn d="M3 7.5H12" /></div>
      <div className="ml-[4px]"><TextBox w="w-[240px]" label="X1000 idealised 3 in cone midrange" align="left" /></div>
      <div className="ml-auto flex items-center">
        <TextBox w="w-[28px]" label="20" />
        <span className="mx-[6px] text-[#666]">...</span>
        <TextBox w="w-[33px]" label="20000" />
        <span className="ml-[4px]">Hz</span>
      </div>
    </div>
  );
}

const dbSpl = ['20', '15', '10', '5', '0', '-5', '-10', '-15', '-20', '-25', '-30'];
const phase = ['180', '144', '108', '72', '36', '0', '-36', '-72', '-108', '-144', '-180'];

export default function App() {
  return (
    <div className="w-[2048px] h-[1175px] overflow-hidden bg-[#f0f0f0] flex font-['Liberation_Sans',sans-serif]">
      <LeftColumn />
      <div className="flex-1 min-w-0 pr-[3px]">
        <TopBar />
        <div className="grid grid-cols-[721px_721px] grid-rows-[374px_374px_376px] gap-[5px]">
          <LineChart title="SPL" unitL="dB" unitR="deg" left={dbSpl} right={phase} minors={5} vb="92 133 1381 1024" curves={splCurves} />
          <LineChart title="GD & Phase" unitL="ms" unitR="deg" left={['15', '10', '5', '0', '-5']} right={['180', '90', '0', '-90', '-180']} minors={5} vb="85 133 1403 1024" curves={gdCurves} />
          <LineChart title="CTA-2034" unitL="dB" unitR="dB" left={dbSpl} right={['45', '40', '35', '30', '25', '20', '15', '10', '5', '0', '-5']} minors={5} vb="92 70 1381 1024" curves={ctaCurves} />
          <LineChart title="Filter" unitL="dB" unitR="deg" left={['10', '5', '0', '-5', '-10', '-15', '-20', '-25', '-30', '-35', '-40']} right={phase} minors={5} vb="85 70 1403 1024" curves={filterCurves} />
          <DirectivityChart id="hor" title="Directivity (hor)" vb="92 67 1381 1028" top={horTop} bottom={horBottom} islands={horIslands} redBand={horRed} plotMap={(p) => p} />
          <DirectivityChart id="ver" title="Directivity (ver)" vb="85 67 1403 1028" top={verTop} bottom={verBottom} islands={verIslands} redBand={verRed} edge plotMap={toVer} />
        </div>
      </div>
    </div>
  );
}
